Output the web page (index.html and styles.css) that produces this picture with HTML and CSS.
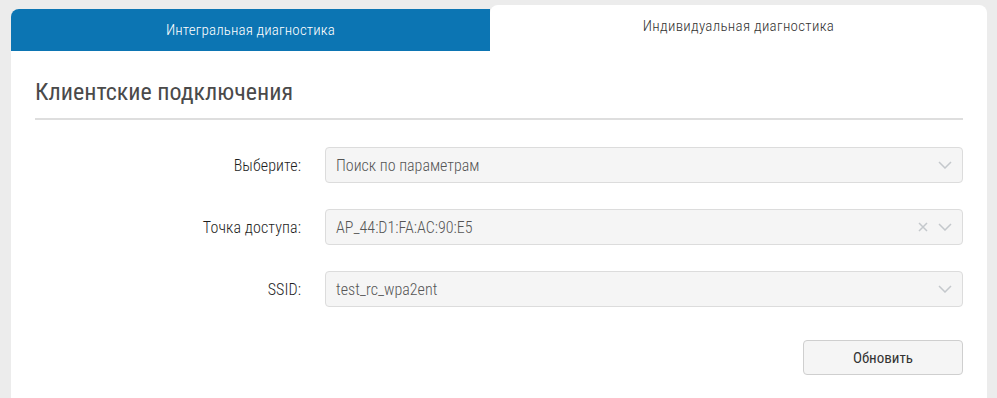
FILE: index.html
```html
<!DOCTYPE html>
<html lang="ru">
  <head>
    <meta charset="UTF-8" />
    <meta name="viewport" content="width=device-width, initial-scale=1.0" />
    <title>Клиентские подключения</title>
    <link rel="stylesheet" href="styles.css">
  </head>
  <body>
    <div class="card">
      <div class="tabs">
        <div class="tab">Интегральная диагностика</div>
        <div class="tab active">Индивидуальная диагностика</div>
      </div>

      <div class="panel">
        <h2 class="title">Клиентские подключения</h2>

        <div class="form">
          <div class="row">
            <label class="label">Выберите:</label>
            <div class="select">
              <span class="value">Поиск по параметрам</span>
              <span class="icons">
                <svg class="chevron" width="14" height="8" viewBox="0 0 14 8"><path d="M1 1l6 6 6-6" /></svg>
              </span>
            </div>
          </div>

          <div class="row">
            <label class="label">Точка доступа:</label>
            <div class="select">
              <span class="value">AP_44:D1:FA:AC:90:E5</span>
              <span class="icons">
                <svg class="clear" width="10" height="10" viewBox="0 0 10 10"><path d="M1 1l8 8M9 1l-8 8" /></svg>
                <svg class="chevron" width="14" height="8" viewBox="0 0 14 8"><path d="M1 1l6 6 6-6" /></svg>
              </span>
            </div>
          </div>

          <div class="row">
            <label class="label">SSID:</label>
            <div class="select">
              <span class="value">test_rc_wpa2ent</span>
              <span class="icons">
                <svg class="chevron" width="14" height="8" viewBox="0 0 14 8"><path d="M1 1l6 6 6-6" /></svg>
              </span>
            </div>
          </div>

          <div class="actions">
            <button class="button">Обновить</button>
          </div>
        </div>
      </div>
    </div>
  </body>
</html>
```

FILE: styles.css
```css
body {
  margin: 0;
  padding: 5px 10px 0 11px;
  background-color: #ececec;
  font-family: "Roboto Condensed", "Liberation Sans Narrow", "Roboto", sans-serif;
  color: #333;
}
.card {
  width: 976px;
}
.tabs {
  display: flex;
  align-items: flex-end;
}
.tab {
  width: 479px;
  height: 42px;
  display: flex;
  align-items: center;
  justify-content: center;
  background-color: #0c75b3;
  color: #fff;
  font-size: 15px;
  font-weight: 300;
  letter-spacing: 0.15px;
  border-radius: 8px 0 0 0;
}
.tab.active {
  flex: 1;
  height: 46px;
  padding-bottom: 4px;
  box-sizing: border-box;
  background-color: #fff;
  color: #333;
  letter-spacing: 0.3px;
  border-radius: 8px 8px 0 0;
}
.panel {
  background-color: #fff;
  padding: 0 24px 30px;
}
.title {
  margin: 0;
  padding: 27px 0 12px;
  font-size: 24px;
  font-weight: 400;
  color: #4a4a4a;
  border-bottom: 2px solid #dedede;
}
.form {
  padding-top: 27px;
}
.row {
  display: flex;
  align-items: center;
  gap: 24px;
  margin-bottom: 26px;
}
.label {
  width: 266px;
  text-align: right;
  font-size: 16px;
  font-weight: 300;
  letter-spacing: 0.1px;
  color: #1e1e1e;
}
.select {
  flex: 1;
  height: 36px;
  box-sizing: border-box;
  display: flex;
  align-items: center;
  justify-content: space-between;
  padding: 0 10px;
  background-color: #f5f5f5;
  border: 1px solid #dcdcdc;
  border-radius: 4px;
  font-size: 16px;
  font-weight: 300;
  color: #555;
}
.icons {
  display: flex;
  align-items: center;
  gap: 10px;
}
.icons svg {
  fill: none;
  stroke: #c4c8cc;
  stroke-width: 1.5;
}
.actions {
  display: flex;
  justify-content: flex-end;
  margin-top: 33px;
}
.button {
  width: 160px;
  height: 35px;
  background-color: #f5f5f5;
  border: 1px solid #cfcfcf;
  border-radius: 4px;
  font-family: inherit;
  font-size: 15px;
  color: #333;
  cursor: pointer;
}
```
